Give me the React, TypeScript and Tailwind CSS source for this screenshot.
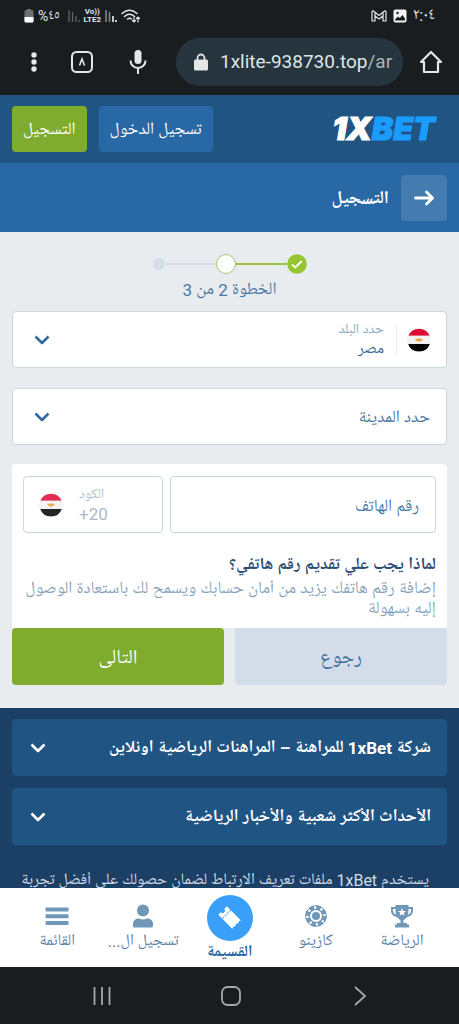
import React, { useState } from "react";

function Flag({ soft = false }: { soft?: boolean }) {
  return (
    <svg viewBox="0 0 24 24" className={soft ? "size-6 shrink-0 opacity-85" : "size-6 shrink-0"} aria-hidden="true">
      <path d="M1.4 7.8A11.5 11.5 0 0 1 22.6 7.8Z" fill="#dc0a32" />
      <path d="M1.2 8A11.5 11.5 0 0 0 1.2 16H22.8A11.5 11.5 0 0 0 22.8 8Z" fill="#f3f3f3" stroke="#dcdcdc" strokeWidth=".4" />
      <path d="M1.2 16A11.5 11.5 0 0 0 22.8 16Z" fill="#000" />
      <path d="M8 10.6Q10.500 11.400 12 10Q13.500 11.400 16 10.600Q15.300 13.400 12 13.800Q8.700 13.400 8 10.600Z" fill="#e8a33a" />
    </svg>
  );
}

function Chevron({ className }: { className: string }) {
  return (
    <svg viewBox="0 0 16 10" className={className} fill="none" stroke="currentColor" strokeWidth="2.600" strokeLinejoin="round" aria-hidden="true">
      <path d="M1.500 1.500 8 8 14.500 1.500" />
    </svg>
  );
}

function StatusBar() {
  return (
    <div dir="ltr" className="flex h-8 shrink-0 items-center justify-between pl-6 pr-6 text-[#e4e6e7]">
      <div className="flex items-center gap-1">
        <svg viewBox="0 0 10 14" className="h-3.5 w-2.5" aria-hidden="true">
          <path d="M3 0H7V1.500H3Z" fill="#777" />
          <rect x=".5" y="1" width="9" height="12.500" rx="1.500" fill="#6d7072" />
          <path d="M.5 8H9.500V12A1.500 1.500 0 0 1 8 13.500H2A1.500 1.500 0 0 1 .5 12Z" fill="#fff" />
        </svg>
        <span className="flex text-sm leading-4"><span>%</span><span>٤٥</span></span>
        <svg viewBox="0 0 12 12" className="ml-1 size-3" stroke="#606467" strokeWidth="1.300" aria-hidden="true">
          <path d="M1 0V12M4.500 2V12M8 6V12M11 10V12" />
        </svg>
        <span className="flex flex-col items-center text-[8px] leading-[8px] font-bold">
          <span>Vo))</span>
          <span>LTE2</span>
        </span>
        <svg viewBox="0 0 12 12" className="size-3" strokeWidth="1.500" aria-hidden="true">
          <path d="M1 0V12M4.500 2V12" stroke="#85898b" />
          <path d="M8 6V12M11 10V12" stroke="#fff" />
        </svg>
        <svg viewBox="0 0 20 15" className="h-4 w-5" fill="none" stroke="currentColor" strokeWidth="1.500" strokeLinecap="round" aria-hidden="true">
          <path d="M1 5Q8.500-1.500 16 5M3.500 8Q8.500 3.500 13.500 8M6.500 10.500Q8.500 9 10.300 10.300" />
          <path d="M13 9V13.500M11.500 12 13 13.500 14.500 12M17 13.500V8.500M15.500 10 17 8.500 18.500 10" strokeWidth="1.200" />
        </svg>
      </div>
      <div className="flex items-center gap-1.5">
        <svg viewBox="0 0 16 12" className="h-3 w-4" fill="none" stroke="currentColor" strokeWidth="1.200" strokeLinejoin="round" aria-hidden="true">
          <path d="M1 11V1.500Q1.500.7 2.500 1L8 5.500 13.500 1Q14.500.7 15 1.500V11H12V6L8 9 4 6V11Z" />
          <path d="M4 2.500V6M12 2.500V6" />
        </svg>
        <svg viewBox="0 0 14 14" className="size-3.5" aria-hidden="true">
          <rect x=".5" y=".5" width="13" height="13" rx="2" fill="#f4f4f4" />
          <path d="M2 10.500 5 7.500 6.800 9 9.500 6 12 9.500V11.500H2Z" fill="#191d20" />
          <circle cx="4.500" cy="4" r="1.200" fill="#191d20" />
        </svg>
        <span className="text-base leading-4">٢:٠٤</span>
      </div>
    </div>
  );
}

function BrowserBar() {
  return (
    <div dir="ltr" className="flex h-[63px] shrink-0 items-center pb-1 pl-5 pr-4 text-[#e4e6e7]">
      <button type="button" aria-label="Menu" className="flex w-7 justify-center">
        <svg viewBox="0 0 6 20" className="h-5 w-1.5" fill="currentColor"><circle cx="3" cy="3" r="2.700" /><circle cx="3" cy="10" r="2.700" /><circle cx="3" cy="17" r="2.700" /></svg>
      </button>
      <button type="button" aria-label="Tabs" className="ml-5 flex w-7 justify-center">
        <svg viewBox="0 0 24 24" className="size-6" fill="none" stroke="currentColor" strokeWidth="2"><rect x="2" y="2" width="20" height="20" rx="4.500" /><path d="M9.500 15.500 12 9 14.500 15.500" strokeWidth="1.600" /></svg>
      </button>
      <button type="button" aria-label="Voice search" className="ml-7 flex w-7 justify-center">
        <svg viewBox="0 0 18 26" className="h-[26px] w-[18px]" fill="none" stroke="currentColor" strokeWidth="2"><rect x="5.500" y="1" width="7" height="14" rx="3.500" fill="currentColor" stroke="none" /><path d="M1.500 11.500A7.500 7.500 0 0 0 16.500 11.500M9 19V25" /></svg>
      </button>
      <button type="button" aria-label="Address" className="ml-6 flex h-12 min-w-0 flex-1 items-center gap-3 rounded-full bg-[#26343d] pl-[18px] pr-2">
        <svg viewBox="0 0 14 18" className="h-[18px] w-3.5 shrink-0"><path d="M3.500 8V5A3.500 3.500 0 0 1 10.500 5V8" fill="none" stroke="#e4e6e7" strokeWidth="1.800" /><rect y="6.500" width="14" height="11" rx="1.500" fill="#e4e6e7" /></svg>
        <span className="pt-0.5 text-[19px] whitespace-nowrap text-[#dfe5e8]">1xlite-938730.top<span className="text-[#a9b4ba]">/ar</span></span>
      </button>
      <button type="button" aria-label="Home" className="ml-4 flex w-6 justify-center">
        <svg viewBox="0 0 24 24" className="size-6" fill="none" stroke="currentColor" strokeWidth="2.200" strokeLinejoin="round"><path d="M12 2 2 12H5V22H19V12H22Z" /></svg>
      </button>
    </div>
  );
}

function Header() {
  return (
    <header className="flex h-[68px] items-center gap-3 bg-[#205583] px-3 text-white">
      <a href="#" dir="ltr" className="ml-auto mr-3 font-[Inter] text-[32px] leading-8 font-black italic [-webkit-text-stroke:1px]">
        1X<span className="text-[#1b9cff]">BET</span>
      </a>
      <button type="button" className="h-[46px] rounded bg-[#2868a4] px-[11px] pt-1 text-[17px]">تسجيل الدخول</button>
      <button type="button" className="h-[46px] rounded bg-[#7fab2e] px-[11px] pt-1 text-[17px]">التسجيل</button>
    </header>
  );
}

function Steps() {
  return (
    <div className="flex flex-col items-center pt-[22px]">
      <div className="flex items-center">
        <svg viewBox="0 0 20 20" className="size-5" aria-hidden="true"><circle cx="10" cy="10" r="9.800" fill="#95c52f" /><path d="M5 10.500 8.200 13.500 14.800 7" fill="none" stroke="#fff" strokeWidth="1.800" /></svg>
        <span className="h-0.5 w-[51px] bg-[#9bc540]" />
        <span className="size-5 rounded-full border border-[#a9c873] bg-[#fdfffc]" />
        <span className="h-0.5 w-[51px] bg-[#d5dee7]" />
        <span className="size-3 rounded-full bg-[#d3dee9]" />
      </div>
      <p className="mt-1 text-[17px] leading-6 text-[#4a76a3]">الخطوة 2 من 3</p>
    </div>
  );
}

function Accordion({ title }: { title: string }) {
  const [open, setOpen] = useState(false);
  return (
    <button type="button" aria-expanded={open} onClick={() => setOpen(!open)} className="flex h-[57px] w-full items-center justify-between rounded bg-[#205583] pl-[18px] pr-4 text-white">
      <span className="pt-0.5 text-[17px] font-bold">{title}</span>
      <Chevron className="h-2.5 w-4" />
    </button>
  );
}

function NavItem({ label, children }: { label: string; children: React.ReactNode }) {
  return (
    <a href="#" className="flex min-w-0 flex-1 flex-col items-center gap-0.5 pt-4 text-[#7096b8]">
      {children}
      <span className="w-full truncate text-center text-base leading-6 text-[#5b82a8]">{label}</span>
    </a>
  );
}

function BottomNav() {
  return (
    <nav className="flex h-[79px] shrink-0 bg-white px-[14px]">
      <NavItem label="الرياضة">
        <svg viewBox="0 0 24 24" className="size-6" fill="currentColor"><path fillRule="evenodd" d="M5.500 1H18.500V3H23V6.500C23 10 20.500 12.500 17 13C16 14.500 14.500 15.500 13.500 16V19H17V20.500H19V23.500H5V20.500H7V19H10.500V16C9.500 15.500 8 14.500 7 13C3.500 12.500 1 10 1 6.500V3H5.500ZM5.500 5H3V6.500C3 8.500 4 10 6 10.800C5.600 9.300 5.500 7 5.500 5ZM18.500 5C18.500 7 18.400 9.300 18 10.800C20 10 21 8.500 21 6.500V5ZM12 4 10.900 6.900 8 7 10.300 8.900 9.500 11.800 12 10.200 14.500 11.800 13.700 8.900 16 7 13.100 6.900Z" /></svg>
      </NavItem>
      <NavItem label="كازينو">
        <svg viewBox="0 0 24 24" className="size-6" fill="none" stroke="currentColor"><circle cx="12" cy="12" r="8.700" strokeWidth="4" strokeDasharray="4.600 2.233" /><circle cx="12" cy="12" r="10.300" strokeWidth="1" /><circle cx="12" cy="12" r="6.700" strokeWidth="1.300" /><circle cx="12" cy="12" r="4" fill="currentColor" stroke="none" /></svg>
      </NavItem>
      <a href="#" className="flex min-w-0 flex-1 flex-col items-center pt-[7px] text-[#2b69a5]">
        <svg viewBox="0 0 46 46" className="size-[46px]"><circle cx="23" cy="23" r="23" fill="#3a9ff8" /><g transform="rotate(45 23 23)" fill="#fff"><path d="M12.500 17H32.500L31.500 19 32.500 21 31.500 23 32.500 25 31.500 27 32.500 29H12.500V25.500A2.500 2.500 0 0 0 12.500 20.500Z" /><path d="M18 17V29" stroke="#3a9ff8" strokeWidth="1" strokeDasharray="2 1.200" /></g></svg>
        <span className="pt-0.5 text-base leading-5 font-bold whitespace-nowrap">القسيمة</span>
      </a>
      <NavItem label="تسجيل ال...">
        <svg viewBox="0 0 24 24" className="size-6" fill="currentColor"><circle cx="12" cy="6.500" r="6" /><path d="M2 20C2 16.500 4.500 14.500 8 14.500Q12 16.500 16 14.500C19.500 14.500 22 16.500 22 20V22Q22 23.500 20.500 23.500H3.500Q2 23.500 2 22Z" /></svg>
      </NavItem>
      <NavItem label="القائمة">
        <svg viewBox="0 0 24 24" className="size-6" fill="currentColor"><rect x=".5" y="3.500" width="23" height="4" rx=".8" /><rect x=".5" y="10.200" width="23" height="4" rx=".8" /><rect x=".5" y="16.900" width="23" height="4" rx=".8" /></svg>
      </NavItem>
    </nav>
  );
}

function SystemNav() {
  return (
    <div dir="ltr" className="grid h-[57px] shrink-0 grid-cols-3 items-center pl-[38px] pr-[35px] text-[#a6a9ab]">
      <button type="button" aria-label="Recents" className="flex justify-center"><svg viewBox="0 0 20 20" className="size-5" stroke="currentColor" strokeWidth="1.800"><path d="M2.500 1V19M10 1V19M17.500 1V19" /></svg></button>
      <button type="button" aria-label="Home screen" className="flex justify-center"><svg viewBox="0 0 20 20" className="size-5" fill="none" stroke="currentColor" strokeWidth="1.800"><rect x="1" y="1" width="18" height="18" rx="5.500" /></svg></button>
      <button type="button" aria-label="Back" className="flex justify-center"><svg viewBox="0 0 20 20" className="size-5" fill="none" stroke="currentColor" strokeWidth="1.800"><path d="M5 1 15 10 5 19" /></svg></button>
    </div>
  );
}

export default function App() {
  return (
    <div dir="rtl" className="flex h-screen flex-col bg-[#191d20] font-[Roboto,'Noto_Naskh_Arabic_UI','Noto_Naskh_Arabic','DejaVu_Sans',sans-serif]">
      <StatusBar />
      <BrowserBar />
      <div className="flex min-h-0 flex-1 flex-col overflow-y-auto bg-[#1c3f66] [scrollbar-width:none] *:shrink-0">
        <Header />
        <div className="flex h-[69px] items-center gap-3 bg-[#2868a4] px-3 text-white">
          <button type="button" aria-label="رجوع" className="flex size-[46px] items-center justify-center rounded bg-[#447cb0]">
            <svg viewBox="0 0 20 16" className="h-4 w-5" fill="none" stroke="currentColor" strokeWidth="2.800" strokeLinecap="round" strokeLinejoin="round"><path d="M1.500 8H18M12.500 2 18.500 8 12.500 14" /></svg>
          </button>
          <h1 className="pt-1 text-lg font-bold">التسجيل</h1>
        </div>

        <form className="bg-[#e8ecef] px-3 pb-[23px]" onSubmit={(e) => e.preventDefault()}>
          <Steps />
          <div className="mt-[9px] flex h-[57px] items-center rounded border border-[#cbd7e0] bg-white pr-[15px] pl-[21px]">
            <Flag />
            <span className="mr-[10px] h-8 w-px bg-[#e8edf1]" />
            <div className="mr-3 flex min-w-0 flex-1 flex-col">
              <label htmlFor="country" className="text-sm leading-5 text-[#8ba6c0]">حدد البلد</label>
              <select id="country" className="h-5 w-full appearance-none bg-transparent text-base leading-5 text-[#3f6d9b] outline-none"><option>مصر</option></select>
            </div>
            <Chevron className="h-2.5 w-4 text-[#2f6aa3]" />
          </div>
          <div className="mt-5 flex h-[57px] items-center rounded border border-[#cbd7e0] bg-white pr-4 pl-[21px]">
            <select aria-label="حدد المدينة" className="h-9 min-w-0 flex-1 appearance-none bg-transparent pt-1 text-[17px] text-[#4a76a3] outline-none"><option>حدد المدينة</option></select>
            <Chevron className="h-2.5 w-4 text-[#2f6aa3]" />
          </div>
          <div className="mt-[19px] rounded bg-white px-[11px] pt-3 pb-[9px]">
            <div className="flex gap-[7px]">
              <input type="tel" aria-label="رقم الهاتف" placeholder="رقم الهاتف" className="h-[57px] min-w-0 flex-1 rounded border border-[#c8d6de] px-4 pt-1 text-right text-[17px] outline-none placeholder:text-[#4a76a3]" />
              <div dir="ltr" className="flex h-[57px] w-[34%] items-center gap-4 rounded border border-[#c8d6de] pl-[15px]">
                <Flag soft />
                <div className="flex min-w-0 flex-1 flex-col">
                  <label htmlFor="code" className="text-sm leading-[18px] text-[#afbfce]">الكود</label>
                  <input id="code" readOnly value="+20" className="w-full text-[17px] leading-5 text-[#a9b9c8] outline-none" />
                </div>
              </div>
            </div>
            <h2 className="mt-5 text-[17px] leading-6 font-bold text-[#2d4f74]">لماذا يجب علي تقديم رقم هاتفي؟</h2>
            <p className="mt-0.5 text-[17px] leading-5 text-[#87a3bd]">إضافة رقم هاتفك يزيد من أمان حسابك ويسمح لك باستعادة الوصول إليه بسهولة</p>
          </div>
          <div className="grid grid-cols-2 gap-[11px] text-xl">
            <button type="button" className="h-[57px] rounded bg-[#d3dde9] pt-1 text-[#3f6d9b]">رجوع</button>
            <button type="submit" className="h-[57px] rounded bg-[#7fab2e] pt-1 text-white">التالى</button>
          </div>
        </form>

        <footer className="flex flex-col gap-3 px-3 pt-[11px]">
          <Accordion title="شركة 1xBet للمراهنة – المراهنات الرياضية اونلاين" />
          <Accordion title="الأحداث الأكثر شعبية والأخبار الرياضية" />
          <p className="mt-3 pr-[18px] pl-2 text-base leading-6 text-[#d3dce5]">يستخدم 1xBet ملفات تعريف الارتباط لضمان حصولك على أفضل تجربة</p>
        </footer>
      </div>
      <BottomNav />
      <SystemNav />
    </div>
  );
}
